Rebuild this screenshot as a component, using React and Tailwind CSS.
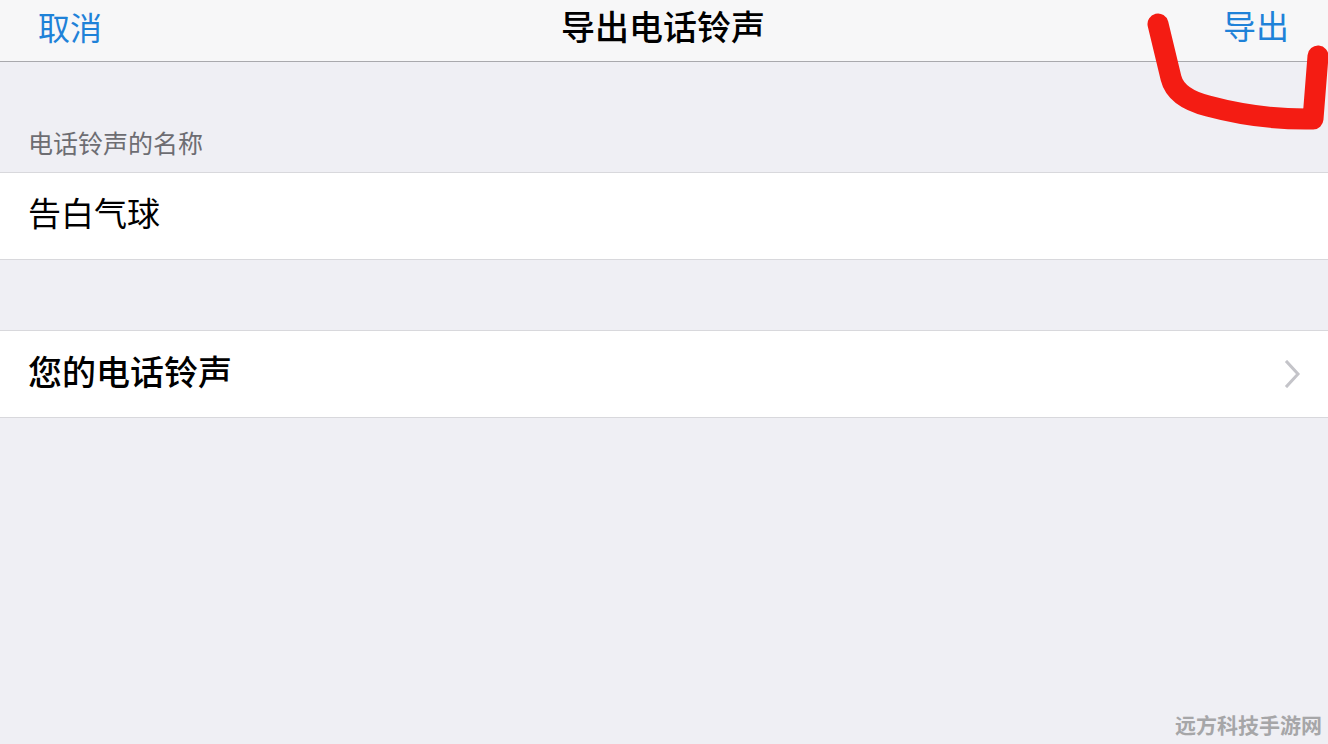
const cjk = { fontFamily: '"Noto Sans CJK SC", "Noto Sans", sans-serif' };

function NavBar() {
  return (
    <header className="h-[62px] bg-[#f7f7f8] border-b border-[#a9a9ad] grid grid-cols-3 items-center px-[38px]">
      <button className="justify-self-start text-[32px] leading-none text-[#1f82d8] -mt-[10px]">取消</button>
      <h1 className="justify-self-center text-[34px] leading-none font-medium text-black -mt-[10px] ml-[-2px]">导出电话铃声</h1>
      <button className="justify-self-end text-[33px] leading-none text-[#1f82d8] -mt-[10px] mr-[1px]">导出</button>
    </header>
  );
}

function Chevron() {
  return (
    <svg width="18" height="28" viewBox="0 0 18 28" className="text-[#c4c4c9]">
      <path d="M3 2 L14 14 L3 26" fill="none" stroke="currentColor" strokeWidth="3" strokeLinecap="square" />
    </svg>
  );
}

export default function App() {
  return (
    <div style={cjk} className="relative w-[1328px] h-[744px] overflow-hidden bg-[#efeff4]">
      <NavBar />

      <main>
        <div className="h-[110px] flex items-end px-[28px] pb-[17px]">
          <span className="text-[25px] leading-none text-[#6d6d72]">电话铃声的名称</span>
        </div>
        <div className="h-[88px] bg-white border-y border-[#d8d8dc] flex items-center px-[28px]">
          <span className="text-[33px] leading-none text-black -mt-[8px]">告白气球</span>
        </div>

        <div className="h-[70px]" />

        <div className="h-[88px] bg-white border-y border-[#d8d8dc] flex items-center justify-between pl-[28px] pr-[26px]">
          <span className="text-[34px] leading-none font-medium text-black -mt-[6px]">您的电话铃声</span>
          <Chevron />
        </div>
      </main>

      {/* hand-drawn marker stroke around the export button */}
      <svg className="absolute left-0 top-0 pointer-events-none" width="1328" height="744">
        <path
          d="M1158 24 L1171 78 Q1176 98 1208 106 Q1260 120 1313 119 L1318 56"
          fill="none"
          stroke="#f41c13"
          strokeWidth="21"
          strokeLinecap="round"
          strokeLinejoin="round"
        />
      </svg>

      <div className="absolute right-[6px] bottom-[9px] text-[21px] leading-none font-bold text-[#a6a6a8]">
        远方科技手游网
      </div>
    </div>
  );
}
